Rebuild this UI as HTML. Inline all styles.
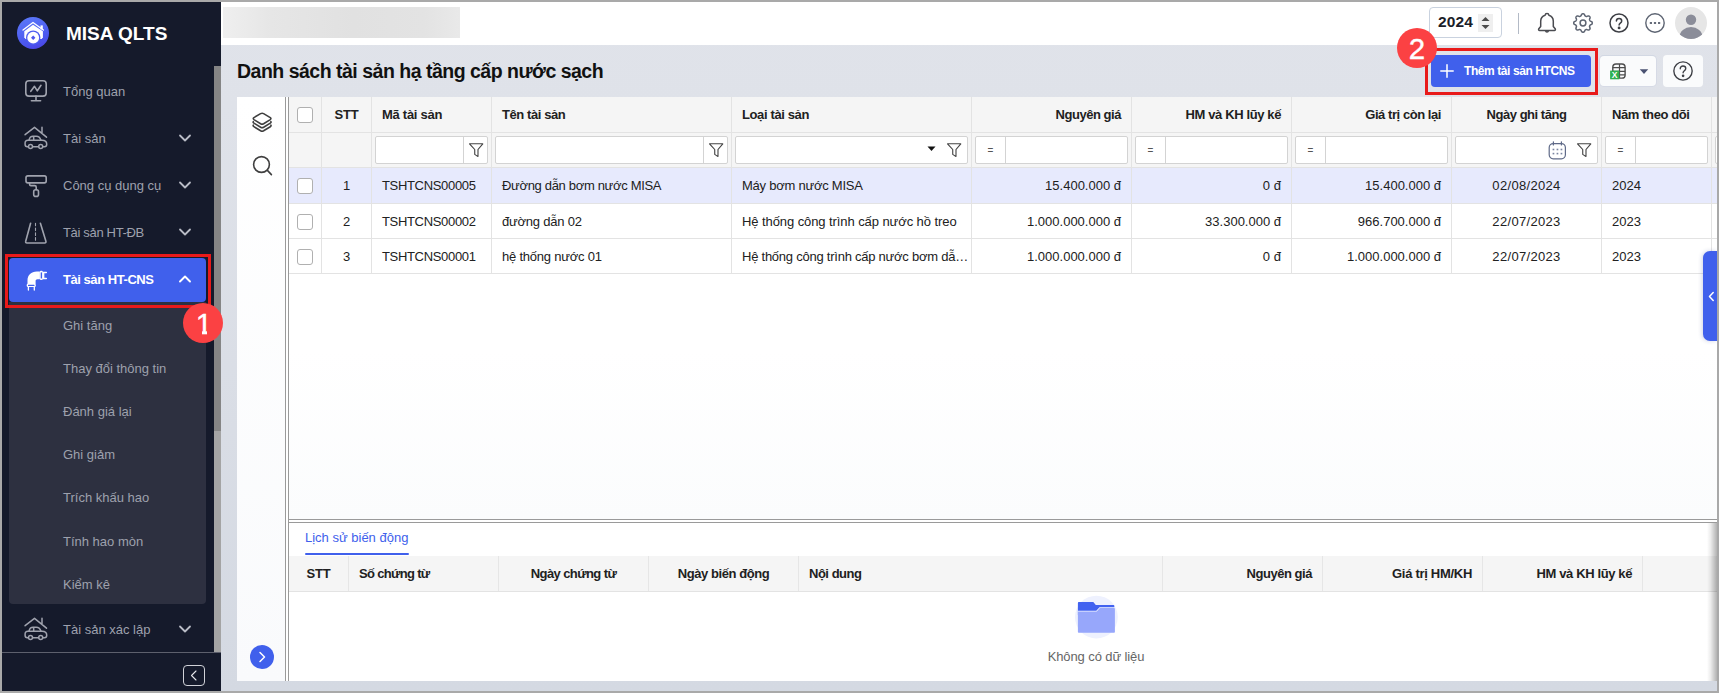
<!DOCTYPE html>
<html lang="vi">
<head>
<meta charset="utf-8">
<title>MISA QLTS - Danh sách tài sản hạ tầng cấp nước sạch</title>
<style>
*{box-sizing:border-box;margin:0;padding:0}
html,body{width:1719px;height:693px;overflow:hidden;background:#a9a9a9;font-family:"Liberation Sans",Arial,sans-serif;font-size:13px;color:#212121}
.abs{position:absolute}
#app{position:absolute;left:2px;top:2px;width:1715px;height:689px;background:linear-gradient(180deg,#e0e3ea 0%,#dfe2e9 15%,#d4d9e2 100%);overflow:hidden}
/* sidebar */
#side{position:absolute;left:0;top:0;width:219px;height:689px;background:#151a2b;color:#9ea1ad}
#side .logo{position:absolute;left:15px;top:15px;width:32px;height:32px;border-radius:50%;background:linear-gradient(160deg,#5c7cfa 0%,#4b55ee 70%,#4a3fe0 100%)}
#side .brand{position:absolute;left:64px;top:20px;font-size:19px;font-weight:700;color:#fff;letter-spacing:0;line-height:24px;white-space:nowrap}
.mi{position:absolute;left:0;width:212px;height:44px}
.mi .ic{position:absolute;left:21px;top:8px;width:26px;height:26px}
.mi .tx{position:absolute;left:61px;top:0;line-height:44px;font-size:13px;white-space:nowrap}
.mi .ch{position:absolute;left:176px;top:15px;width:14px;height:12px}
.mi.act{left:7px;width:197px;background:#4060ec;border-radius:4px;color:#fff}
.mi.act .tx{left:54px;font-weight:700;letter-spacing:-.45px}
.mi.act .ic{left:14px}
.mi.act .ch{left:169px}
#sub{position:absolute;left:7px;top:300px;width:197px;height:302px;background:#2d3040;border-radius:0 0 4px 4px}
#sub div{position:absolute;left:54px;font-size:13px;line-height:20px;white-space:nowrap;color:#9ea1ad}
#sbar{position:absolute;left:212px;top:64px;width:7px;height:587px;background:#a4a4a4}
#sbar i{position:absolute;left:0;top:0;width:7px;height:365px;background:#858585}
#sfoot{position:absolute;left:0;top:650px;width:219px;height:39px;border-top:1px solid #5d606d;background:#151a2b}
#sfoot .cb{position:absolute;left:181px;top:12px;width:22px;height:21px;border:1px solid #d0d2d8;border-radius:4px}
/* header */
#head{position:absolute;left:219px;top:0;width:1496px;height:43px;background:#fff}
#blur{position:absolute;left:2px;top:5px;width:237px;height:31px;background:linear-gradient(90deg,#efefef,#e6e6e6 20%,#e1e1e1 55%,#e3e3e3 85%,#e9e9e9)}
#year{position:absolute;left:1208px;top:5px;width:73px;height:31px;border:1px solid #c9d2df;border-radius:4px;background:#fff}
#year b{position:absolute;left:8px;top:-1px;line-height:30px;font-size:15.5px;font-weight:700;color:#1b1d29;letter-spacing:.1px}
#year i{position:absolute;left:48px;top:6px;width:15px;height:18px;background:#efefef}
#vdiv{position:absolute;left:1297px;top:11px;width:1px;height:21px;background:#b3bac6}
/* toolbar */
#title{position:absolute;left:235px;top:55px;font-size:19.500px;font-weight:700;color:#111;line-height:28px;letter-spacing:-.5px;white-space:nowrap}
#addbtn{position:absolute;left:1429px;top:53px;width:160px;height:32px;background:#4060ec;border-radius:4px;color:#fff}
#addbtn span{position:absolute;left:33px;top:0;line-height:32px;font-size:12px;font-weight:700;letter-spacing:-.42px;white-space:nowrap}
.wbtn{position:absolute;top:53px;height:32px;background:#fafbfc;border-radius:4px}
.redbox{position:absolute;border:3px solid #e81a1a}
.badge{position:absolute;width:40px;height:40px;border-radius:50%;background:#fb4143;color:#fff;font-size:29.500px;line-height:41.400px;text-align:center;overflow:hidden;-webkit-text-stroke:.35px #fff}
/* panel */
#panel{position:absolute;left:235px;top:95px;width:1480px;height:584px;background:#fff}
#lp{position:absolute;left:0;top:0;width:48px;height:584px;background:linear-gradient(180deg,#fff,#f9fafc)}
.vl{position:absolute;top:0;width:1px;height:584px;background:#9a9a9a}
.hl{position:absolute;left:52px;width:1428px;height:1px;background:#9a9a9a}
/* grid */
#grid{position:absolute;left:52px;top:0;width:1428px;height:422px;background:linear-gradient(180deg,#fff 60%,#fbfcfd)}
.row{position:absolute;left:0;width:1428px;border-bottom:1px solid #e3e3e3}
.row.hd{background:#f5f5f5;font-weight:700}
.row.sel{background:#e7eafd}
.row.sel .c{line-height:36px}.row.sel .cb{top:10px}
.c{position:absolute;top:0;height:100%;border-right:1px solid #e3e3e3;padding:0 10px;white-space:nowrap;overflow:hidden;line-height:35px}

.r{text-align:right}.m{text-align:center}
.cb{position:absolute;left:8px;top:10px;width:16px;height:16px;border:1px solid #b0b0b0;border-radius:3px;background:#fff}
.fi{position:absolute;top:3px;height:28px;border:1px solid #d3d3d3;border-radius:2px;background:#fff}
.fi u{position:absolute;top:0;width:1px;height:26px;background:#d3d3d3}
.fi em{position:absolute;left:11.500px;top:2px;line-height:24px;font-style:normal;font-size:10px;color:#555}
/* bottom */
#bot{position:absolute;left:52px;top:426px;width:1428px;height:158px;background:#fff}
#tab{position:absolute;left:16px;top:4px;line-height:22px;color:#4060ec;font-size:13px;white-space:nowrap}
#tabu{position:absolute;left:16px;top:30px;width:104px;height:2px;background:#4060ec;border-radius:1px}
#bh{position:absolute;left:0;top:33px;width:1428px;height:36px;background:#f5f5f5;border-bottom:1px solid #e3e3e3;font-weight:700}
#bh .c{line-height:35px;border-right:1px solid #e6e6e6}
#nodata{position:absolute;left:707px;top:126px;width:200px;text-align:center;color:#666;font-size:13px;letter-spacing:-.1px}
</style>
</head>
<body>
<div id="app">

<!-- ============ SIDEBAR ============ -->
<div id="side">
  <div class="logo">
    <svg width="32" height="32" viewBox="0 0 32 32"><path d="M6 13 16 5.400 26.400 13" fill="none" stroke="#fff" stroke-width="1.300" stroke-linecap="round" stroke-linejoin="round"/><rect x="23.500" y="8.400" width="2.300" height="4" fill="#fff"/><path d="M7.300 14.300 16 7.700l9.900 6.600v6l-1.200 1.600H8.500l-1.200-1.600z" fill="#fff"/><circle cx="16.200" cy="20.700" r="7.200" fill="#4d5cf0"/><circle cx="16.200" cy="20.700" r="5.900" fill="#fff"/><path d="M16.200 18.500l2.200 2.200-2.200 2.200-2.200-2.200z" fill="#4d55ee"/></svg>
  </div>
  <div class="brand">MISA QLTS</div>

  <div class="mi" style="top:68px">
    <svg class="ic" viewBox="0 0 26 26" fill="none" stroke="#a0a3ae" stroke-width="1.600" stroke-linecap="round" stroke-linejoin="round"><rect x="2.800" y="2.800" width="20.400" height="15.300" rx="3.200"/><path d="M13 18.100v4.500M8.400 22.700h9.200M7.800 13.300l3.700-5 2.800 4.500 3.700-5.500"/></svg>
    <div class="tx">Tổng quan</div>
  </div>
  <div class="mi" style="top:115px">
    <svg class="ic" viewBox="0 0 26 26" fill="none" stroke="#a0a3ae" stroke-width="1.500" stroke-linecap="round" stroke-linejoin="round"><path d="M2.100 9.700 11.500 2.300l12 9.900M19 2.300v6.100"/><path d="M6 15.200c.6-2.700 2-3.900 4-3.900h3.300c2.200 0 3.700 1.100 4.700 3.900M10.700 11.500v3.700"/><path d="M5.400 21.700H4.300c-1.300 0-2.200-.9-2.200-2.200v-1.600c0-1.600 1-2.700 2.700-2.700H19c2.800 0 4.700 1.500 4.700 3.800v.5c0 1.300-.9 2.200-2.200 2.200h-1.700M9.600 21.700h6"/><circle cx="7.500" cy="21.600" r="2"/><circle cx="17.700" cy="21.600" r="2"/></svg>
    <div class="tx">Tài sản</div>
    <svg class="ch" viewBox="0 0 14 12" fill="none" stroke="#b9bcc6" stroke-width="1.8" stroke-linecap="round" stroke-linejoin="round"><path d="M2 3.500 7 8.500l5-5"/></svg>
  </div>
  <div class="mi" style="top:162px">
    <svg class="ic" viewBox="0 0 26 26" fill="none" stroke="#a0a3ae" stroke-width="1.600" stroke-linecap="round" stroke-linejoin="round"><rect x="3" y="3.900" width="20.200" height="7" rx="1.800"/><path d="M6.600 10.900v1.300c0 .9.500 1.400 1.400 1.400h3.700c1 0 1.500.5 1.500 1.500v2.700"/><rect x="10.700" y="17.800" width="4.800" height="6.600" rx="2"/></svg>
    <div class="tx">Công cụ dụng cụ</div>
    <svg class="ch" viewBox="0 0 14 12" fill="none" stroke="#b9bcc6" stroke-width="1.8" stroke-linecap="round" stroke-linejoin="round"><path d="M2 3.500 7 8.500l5-5"/></svg>
  </div>
  <div class="mi" style="top:209px">
    <svg class="ic" viewBox="0 0 26 26" fill="none" stroke="#a0a3ae" stroke-width="1.600" stroke-linecap="round" stroke-linejoin="round"><path d="M7.600 4.200 2.700 22.300c-.3 1 .2 1.700 1.200 1.700h17.800c1 0 1.500-.7 1.200-1.700L17.400 4.200"/><path d="M12.500 4.200v2.600M12.500 9v2.600M12.500 13.800v2.600M12.500 18.600v2.600" stroke-width="1.100"/></svg>
    <div class="tx" style="letter-spacing:-.33px">Tài sản HT-ĐB</div>
    <svg class="ch" viewBox="0 0 14 12" fill="none" stroke="#b9bcc6" stroke-width="1.8" stroke-linecap="round" stroke-linejoin="round"><path d="M2 3.500 7 8.500l5-5"/></svg>
  </div>
  <div class="mi act" style="top:256px">
    <svg class="ic" viewBox="0 0 26 26"><path d="M4.500 18v-3.500c0-5.400 3.700-9 9.300-9h3.100v7.800h-2.400c-1.300 0-1.900.7-1.900 1.900V18z" fill="#fff"/><rect x="16.800" y="4.700" width="3.100" height="9.400" rx="1.300" fill="#fff"/><rect x="17.700" y="6.200" width="1.300" height="6.400" rx=".6" fill="#4060ec"/><path d="M23.300 6.400h-2.700v6.100h2.700" stroke="#fff" stroke-width="1.500" fill="none" stroke-linecap="round"/><rect x="3.700" y="17.700" width="9.100" height="3.300" rx="1.300" fill="#fff"/><rect x="5" y="18.800" width="6.500" height="1.100" rx=".5" fill="#4060ec"/><path d="M5.400 20.800v3.300M11.300 20.800v3.300" stroke="#fff" stroke-width="1.300" stroke-linecap="round"/></svg>
    <div class="tx">Tài sản HT-CNS</div>
    <svg class="ch" viewBox="0 0 14 12" fill="none" stroke="#fff" stroke-width="1.9" stroke-linecap="round" stroke-linejoin="round"><path d="M2 8.500 7 3.500l5 5"/></svg>
  </div>
  <div id="sub">
    <div style="top:14px">Ghi tăng</div>
    <div style="top:57px">Thay đổi thông tin</div>
    <div style="top:100px">Đánh giá lại</div>
    <div style="top:143px">Ghi giảm</div>
    <div style="top:186px">Trích khấu hao</div>
    <div style="top:230px">Tính hao mòn</div>
    <div style="top:273px">Kiểm kê</div>
  </div>
  <div class="mi" style="top:606px">
    <svg class="ic" viewBox="0 0 26 26" fill="none" stroke="#a0a3ae" stroke-width="1.500" stroke-linecap="round" stroke-linejoin="round"><path d="M2.100 9.700 11.500 2.300l12 9.900M19 2.300v6.100"/><path d="M6 15.200c.6-2.700 2-3.900 4-3.900h3.300c2.200 0 3.700 1.100 4.700 3.900M10.700 11.500v3.700"/><path d="M5.400 21.700H4.300c-1.300 0-2.200-.9-2.200-2.200v-1.600c0-1.600 1-2.700 2.700-2.700H19c2.800 0 4.700 1.500 4.700 3.800v.5c0 1.300-.9 2.200-2.200 2.200h-1.700M9.600 21.700h6"/><circle cx="7.500" cy="21.600" r="2"/><circle cx="17.700" cy="21.600" r="2"/></svg>
    <div class="tx">Tài sản xác lập</div>
    <svg class="ch" viewBox="0 0 14 12" fill="none" stroke="#b9bcc6" stroke-width="1.8" stroke-linecap="round" stroke-linejoin="round"><path d="M2 3.500 7 8.500l5-5"/></svg>
  </div>
  <div id="sbar"><i></i></div>
  <div id="sfoot"><div class="cb" style="background:none"><svg width="20" height="19" viewBox="0 0 20 19" fill="none" stroke="#e6e7ea" stroke-width="1.100" stroke-linecap="round" stroke-linejoin="round"><path d="M12 5 7.500 9.500 12 14"/></svg></div></div>
</div>
<div class="redbox" style="left:3px;top:252px;width:206px;height:54px"></div>
<div class="badge" style="left:181px;top:301px;padding-left:2px">1<i style="position:absolute;left:13px;top:27.300px;width:6.200px;height:5px;background:#fb4143"></i><i style="position:absolute;left:23.700px;top:27.300px;width:6px;height:5px;background:#fb4143"></i></div>

<!-- ============ HEADER ============ -->
<div id="head">
  <div id="blur"></div>
  <div id="year"><b>2024</b><i><svg width="15" height="18" viewBox="0 0 15 18"><path d="M7.500 3.100l4 3.900h-8zM7.500 14.900l-4-3.900h8z" fill="#4a4a4a"/></svg></i></div>
  <div id="vdiv"></div>
  <!-- bell -->
  <svg class="abs" style="left:1314px;top:9px" width="24" height="24" viewBox="0 0 24 24" fill="none" stroke="#4a4b50" stroke-width="1.500" stroke-linecap="round" stroke-linejoin="round"><path d="M12 2.600c-1 0-1.800.700-1.900 1.700-2.700.800-4.400 3.100-4.400 6v5.200l-1.900 2.300c-.5.700-.1 1.600.8 1.600h14.800c.9 0 1.300-.9.800-1.600l-1.900-2.300v-5.200c0-2.900-1.700-5.200-4.400-6-.1-1-.9-1.700-1.900-1.700z"/><path d="M10.500 19.700c.2.900.7 1.400 1.500 1.400s1.300-.5 1.500-1.400"/></svg>
  <!-- gear -->
  <svg class="abs" style="left:1350px;top:9px" width="24" height="24" viewBox="0 0 24 24" fill="none" stroke="#5d6472" stroke-width="1.500" stroke-linejoin="round"><path d="M12.00 2.75L12.36 2.77L12.72 2.86L13.06 3.05L13.36 3.40L13.61 3.91L13.82 4.43L14.03 4.80L14.27 5.03L14.52 5.18L14.77 5.30L15.04 5.40L15.33 5.47L15.66 5.47L16.07 5.36L16.58 5.14L17.12 4.95L17.58 4.92L17.95 5.03L18.27 5.22L18.54 5.46L18.78 5.73L18.97 6.05L19.08 6.42L19.05 6.88L18.86 7.42L18.64 7.93L18.53 8.34L18.53 8.67L18.60 8.96L18.70 9.23L18.82 9.48L18.97 9.73L19.20 9.97L19.57 10.18L20.09 10.39L20.60 10.64L20.95 10.94L21.14 11.28L21.23 11.64L21.25 12.00L21.23 12.36L21.14 12.72L20.95 13.06L20.60 13.36L20.09 13.61L19.57 13.82L19.20 14.03L18.97 14.27L18.82 14.52L18.70 14.77L18.60 15.04L18.53 15.33L18.53 15.66L18.64 16.07L18.86 16.58L19.05 17.12L19.08 17.58L18.97 17.95L18.78 18.27L18.54 18.54L18.27 18.78L17.95 18.97L17.58 19.08L17.12 19.05L16.58 18.86L16.07 18.64L15.66 18.53L15.33 18.53L15.04 18.60L14.77 18.70L14.52 18.82L14.27 18.97L14.03 19.20L13.82 19.57L13.61 20.09L13.36 20.60L13.06 20.95L12.72 21.14L12.36 21.23L12.00 21.25L11.64 21.23L11.28 21.14L10.94 20.95L10.64 20.60L10.39 20.09L10.18 19.57L9.97 19.20L9.73 18.97L9.48 18.82L9.23 18.70L8.96 18.60L8.67 18.53L8.34 18.53L7.93 18.64L7.42 18.86L6.88 19.05L6.42 19.08L6.05 18.97L5.73 18.78L5.46 18.54L5.22 18.27L5.03 17.95L4.92 17.58L4.95 17.12L5.14 16.58L5.36 16.07L5.47 15.66L5.47 15.33L5.40 15.04L5.30 14.77L5.18 14.52L5.03 14.27L4.80 14.03L4.43 13.82L3.91 13.61L3.40 13.36L3.05 13.06L2.86 12.72L2.77 12.36L2.75 12.00L2.77 11.64L2.86 11.28L3.05 10.94L3.40 10.64L3.91 10.39L4.43 10.18L4.80 9.97L5.03 9.73L5.18 9.48L5.30 9.23L5.40 8.96L5.47 8.67L5.47 8.34L5.36 7.93L5.14 7.42L4.95 6.88L4.92 6.42L5.03 6.05L5.22 5.73L5.46 5.46L5.73 5.22L6.05 5.03L6.42 4.92L6.88 4.95L7.42 5.14L7.93 5.36L8.34 5.47L8.67 5.47L8.96 5.40L9.23 5.30L9.48 5.18L9.73 5.03L9.97 4.80L10.18 4.43L10.39 3.91L10.64 3.40L10.94 3.05L11.28 2.86L11.64 2.77Z"/><circle cx="12" cy="12" r="2.900"/></svg>
  <!-- help -->
  <svg class="abs" style="left:1386px;top:9px" width="24" height="24" viewBox="0 0 24 24" fill="none" stroke="#3d3f45" stroke-width="1.500" stroke-linecap="round"><circle cx="12" cy="12" r="9"/><path d="M9.400 10.100c0-1.500 1.100-2.500 2.700-2.500 1.500 0 2.600.9 2.600 2.300 0 2.100-2.600 2.200-2.600 4"/><circle cx="12.100" cy="16.900" r=".7" fill="#3d3f45"/></svg>
  <!-- more -->
  <svg class="abs" style="left:1422px;top:9px" width="24" height="24" viewBox="0 0 24 24" fill="none" stroke="#5d6472" stroke-width="1.400"><circle cx="12" cy="12" r="9.200"/><g fill="#666c7a" stroke="none"><rect x="6.800" y="11" width="2.200" height="2"/><rect x="10.900" y="11" width="2.200" height="2"/><rect x="15" y="11" width="2.200" height="2"/></g></svg>
  <!-- avatar -->
  <svg class="abs" style="left:1454px;top:5px" width="32" height="32" viewBox="0 0 32 32"><defs><clipPath id="av"><circle cx="16" cy="16" r="16"/></clipPath></defs><circle cx="16" cy="16" r="16" fill="#e6e6e6"/><g clip-path="url(#av)" fill="#8b8d99"><circle cx="16" cy="12.800" r="5.200"/><ellipse cx="16" cy="30" rx="11.500" ry="10"/></g></svg>
</div>

<!-- ============ TOOLBAR ============ -->
<div id="title">Danh sách tài sản hạ tầng cấp nước sạch</div>
<div id="addbtn"><svg class="abs" style="left:9px;top:9px" width="14" height="14" viewBox="0 0 14 14" stroke="#fff" stroke-width="1.500" stroke-linecap="round"><path d="M7 .8v12.400M.8 7h12.400"/></svg><span>Thêm tài sản HTCNS</span></div>
<div class="wbtn" style="left:1598px;width:56px;top:54px;height:30px;box-shadow:0 -1px 0 0 #d2d8e3,0 0 0 1px rgba(205,212,225,.55)">
  <svg class="abs" style="left:9px;top:6px" width="19" height="19" viewBox="0 0 19 19"><rect x="3.800" y="2" width="12.300" height="14.100" rx="3.200" fill="none" stroke="#4d4d4d" stroke-width="1.400"/><path d="M3.800 5.700h12.300M3.800 9.300h12.300M3.800 12.800h12.300M10.500 2v14.100" stroke="#4d4d4d" stroke-width="1.200" fill="none"/><rect x="1.100" y="8.600" width="9.200" height="8.700" fill="#2fb14f"/><text x="5.700" y="16.200" font-family="Liberation Sans,Arial,sans-serif" font-size="8.500" font-weight="700" fill="#fff" text-anchor="middle">X</text></svg>
  <svg class="abs" style="left:39px;top:12px" width="10" height="7" viewBox="0 0 10 7"><path d="M.8 1.200h8.400L5 6z" fill="#4a5272"/></svg>
</div>
<div class="wbtn" style="left:1661px;width:40px">
  <svg class="abs" style="left:9px;top:5px" width="22" height="22" viewBox="0 0 24 24" fill="none" stroke="#3d3f45" stroke-width="1.500" stroke-linecap="round"><circle cx="12" cy="12" r="10"/><path d="M9 9.500c0-1.700 1.300-2.900 3-2.900s3 1.100 3 2.700c0 2.400-2.900 2.500-2.900 4.700"/><circle cx="12.100" cy="17.300" r=".7" fill="#3d3f45"/></svg>
</div>
<div class="redbox" style="left:1423px;top:46px;width:173px;height:47px"></div>
<div class="badge" style="left:1395px;top:26px">2</div>

<!-- ============ PANEL ============ -->
<div id="panel">
  <div id="lp">
    <svg class="abs" style="left:14px;top:14px" width="22" height="22" viewBox="0 0 22 22" fill="none" stroke="#3f3f3f" stroke-width="1.600" stroke-linejoin="round" stroke-linecap="round"><path d="M9.600 2.600Q11.100 1.800 12.600 2.600L19.300 6.600Q20.600 7.600 19.300 8.600L12.600 12.700Q11.100 13.500 9.600 12.700L2.900 8.600Q1.600 7.600 2.900 6.600Z"/><path d="M2.300 10.600Q1.800 11.400 2.900 12.100L9.600 16.200Q11.100 17 12.600 16.200L19.300 12.100Q20.400 11.400 19.900 10.600"/><path d="M2.300 14.200Q1.800 15 2.900 15.700L9.600 19.800Q11.100 20.600 12.600 19.800L19.300 15.700Q20.400 15 19.900 14.200"/></svg>
    <svg class="abs" style="left:14px;top:57px" width="23" height="23" viewBox="0 0 23 23" fill="none" stroke="#3f3f3f" stroke-width="1.600" stroke-linecap="round"><circle cx="10.500" cy="10.500" r="7.900"/><path d="M16.400 16.400l4 4.200"/></svg>
    <div class="abs" style="left:13px;top:548px;width:24px;height:24px;border-radius:50%;background:#4060ec"><svg width="24" height="24" viewBox="0 0 24 24" fill="none" stroke="#fff" stroke-width="1.500" stroke-linecap="round" stroke-linejoin="round"><path d="M10 7.500l4.500 4.500L10 16.500"/></svg></div>
  </div>
  <div class="vl" style="left:48px"></div><div class="vl" style="left:51px"></div>

  <div id="grid">
    <div class="row hd" style="top:0;height:36px">
      <div class="c" style="left:0;width:33px"><span class="cb"></span></div>
      <div class="c m" style="left:33px;width:50px;letter-spacing:-0.19px">STT</div>
      <div class="c" style="left:83px;width:120px;letter-spacing:-0.28px">Mã tài sản</div>
      <div class="c" style="left:203px;width:240px;letter-spacing:-0.41px">Tên tài sản</div>
      <div class="c" style="left:443px;width:240px;letter-spacing:-0.38px">Loại tài sản</div>
      <div class="c r" style="left:683px;width:160px;letter-spacing:-0.46px">Nguyên giá</div>
      <div class="c r" style="left:843px;width:160px;letter-spacing:-0.38px">HM và KH lũy kế</div>
      <div class="c r" style="left:1003px;width:160px;letter-spacing:-0.44px">Giá trị còn lại</div>
      <div class="c m" style="left:1163px;width:150px;letter-spacing:-0.47px">Ngày ghi tăng</div>
      <div class="c" style="left:1313px;width:110px;letter-spacing:-0.4px">Năm theo dõi</div>
    </div>
    <div class="row" style="top:36px;height:35px;background:#f5f5f5">
      <div class="c" style="left:0;width:33px"></div>
      <div class="c" style="left:33px;width:50px"></div>
      <div class="c" style="left:83px;width:120px"><div class="fi" style="left:3px;width:113px"><u style="left:87px"></u><svg class="abs" style="left:92px;top:5px" width="16" height="16" viewBox="0 0 16 16" fill="none" stroke="#444" stroke-width="1.100" stroke-linejoin="round"><path d="M1.500 1.500h13L9.800 7.800v7.800l-3.200-2.300V7.800z" transform="translate(0 .5) scale(1.02 .9)"/></svg></div></div>
      <div class="c" style="left:203px;width:240px"><div class="fi" style="left:3px;width:233px"><u style="left:207px"></u><svg class="abs" style="left:212px;top:5px" width="16" height="16" viewBox="0 0 16 16" fill="none" stroke="#444" stroke-width="1.100" stroke-linejoin="round"><path d="M1.500 1.500h13L9.800 7.800v7.800l-3.200-2.300V7.800z" transform="translate(0 .5) scale(1.02 .9)"/></svg></div></div>
      <div class="c" style="left:443px;width:240px"><div class="fi" style="left:3px;width:233px"><svg class="abs" style="left:191px;top:9px" width="9" height="6" viewBox="0 0 9 6"><path d="M.5.400h8L4.500 5z" fill="#111"/></svg><svg class="abs" style="left:210px;top:5px" width="16" height="16" viewBox="0 0 16 16" fill="none" stroke="#444" stroke-width="1.100" stroke-linejoin="round"><path d="M1.500 1.500h13L9.800 7.800v7.800l-3.200-2.300V7.800z" transform="translate(0 .5) scale(1.02 .9)"/></svg></div></div>
      <div class="c" style="left:683px;width:160px"><div class="fi" style="left:3px;width:153px"><u style="left:29px"></u><em>=</em></div></div>
      <div class="c" style="left:843px;width:160px"><div class="fi" style="left:3px;width:153px"><u style="left:29px"></u><em>=</em></div></div>
      <div class="c" style="left:1003px;width:160px"><div class="fi" style="left:3px;width:153px"><u style="left:29px"></u><em>=</em></div></div>
      <div class="c" style="left:1163px;width:150px"><div class="fi" style="left:3px;width:143px"><svg class="abs" style="left:92px;top:3px" width="19" height="20" viewBox="0 0 19 20" fill="none" stroke="#5f6a88" stroke-width="1.200" stroke-linecap="round"><rect x="1.200" y="3.600" width="16.200" height="15.200" rx="4"/><path d="M5.400 1.800v3.200M13.400 1.800v3.200"/><g fill="#7b85a1" stroke="none"><rect x="4.600" y="8.700" width="1.700" height="1.600"/><rect x="8.600" y="8.700" width="1.700" height="1.600"/><rect x="12.600" y="8.700" width="1.700" height="1.600"/><rect x="4.600" y="12.800" width="1.700" height="1.600"/><rect x="8.600" y="12.800" width="1.700" height="1.600"/><rect x="12.600" y="12.800" width="1.700" height="1.600"/></g></svg><svg class="abs" style="left:120px;top:5px" width="16" height="16" viewBox="0 0 16 16" fill="none" stroke="#444" stroke-width="1.100" stroke-linejoin="round"><path d="M1.500 1.500h13L9.800 7.800v7.800l-3.200-2.300V7.800z" transform="translate(0 .5) scale(1.02 .9)"/></svg></div></div>
      <div class="c" style="left:1313px;width:110px"><div class="fi" style="left:3px;width:103px"><u style="left:29px"></u><em>=</em></div></div>
      <div class="c" style="left:1423px;width:5px;border-right:none;padding:0"><div class="fi" style="left:3px;width:20px"></div></div>
    </div>
    <div class="row sel" style="top:71px;height:36px">
      <div class="c" style="left:0;width:33px"><span class="cb"></span></div>
      <div class="c m" style="left:33px;width:50px">1</div>
      <div class="c" style="left:83px;width:120px;letter-spacing:-0.33px">TSHTCNS00005</div>
      <div class="c" style="left:203px;width:240px;letter-spacing:-0.32px">Đường dẫn bơm nước MISA</div>
      <div class="c" style="left:443px;width:240px;letter-spacing:-0.24px">Máy bơm nước MISA</div>
      <div class="c r" style="left:683px;width:160px">15.400.000 đ</div>
      <div class="c r" style="left:843px;width:160px;letter-spacing:0.1px">0 đ</div>
      <div class="c r" style="left:1003px;width:160px">15.400.000 đ</div>
      <div class="c m" style="left:1163px;width:150px;letter-spacing:0.32px">02/08/2024</div>
      <div class="c" style="left:1313px;width:110px">2024</div>
    </div>
    <div class="row" style="top:107px;height:35px">
      <div class="c" style="left:0;width:33px"><span class="cb"></span></div>
      <div class="c m" style="left:33px;width:50px">2</div>
      <div class="c" style="left:83px;width:120px;letter-spacing:-0.33px">TSHTCNS00002</div>
      <div class="c" style="left:203px;width:240px;letter-spacing:-0.22px">đường dẫn 02</div>
      <div class="c" style="left:443px;width:240px;letter-spacing:-0.08px">Hệ thống công trình cấp nước hồ treo</div>
      <div class="c r" style="left:683px;width:160px">1.000.000.000 đ</div>
      <div class="c r" style="left:843px;width:160px">33.300.000 đ</div>
      <div class="c r" style="left:1003px;width:160px">966.700.000 đ</div>
      <div class="c m" style="left:1163px;width:150px;letter-spacing:0.32px">22/07/2023</div>
      <div class="c" style="left:1313px;width:110px">2023</div>
    </div>
    <div class="row" style="top:142px;height:35px">
      <div class="c" style="left:0;width:33px"><span class="cb"></span></div>
      <div class="c m" style="left:33px;width:50px">3</div>
      <div class="c" style="left:83px;width:120px;letter-spacing:-0.33px">TSHTCNS00001</div>
      <div class="c" style="left:203px;width:240px;letter-spacing:-0.22px">hệ thống nước 01</div>
      <div class="c" style="left:443px;width:240px;text-overflow:ellipsis;padding-right:2px;letter-spacing:-0.24px">Hệ thống công trình cấp nước bơm dẫn nước</div>
      <div class="c r" style="left:683px;width:160px">1.000.000.000 đ</div>
      <div class="c r" style="left:843px;width:160px;letter-spacing:0.1px">0 đ</div>
      <div class="c r" style="left:1003px;width:160px">1.000.000.000 đ</div>
      <div class="c m" style="left:1163px;width:150px;letter-spacing:0.32px">22/07/2023</div>
      <div class="c" style="left:1313px;width:110px">2023</div>
    </div>
  </div>

  <div class="hl" style="top:422px"></div><div class="hl" style="top:425px"></div>

  <div id="bot">
    <div id="tab">Lịch sử biến động</div><div id="tabu"></div>
    <div id="bh">
      <div class="c m" style="left:0;width:60px;letter-spacing:-0.19px">STT</div>
      <div class="c" style="left:60px;width:150px;letter-spacing:-0.68px">Số chứng từ</div>
      <div class="c m" style="left:210px;width:150px;letter-spacing:-0.6px">Ngày chứng từ</div>
      <div class="c m" style="left:360px;width:150px;letter-spacing:-0.42px">Ngày biến động</div>
      <div class="c" style="left:510px;width:364px;letter-spacing:-0.48px">Nội dung</div>
      <div class="c r" style="left:874px;width:160px;letter-spacing:-0.46px">Nguyên giá</div>
      <div class="c r" style="left:1034px;width:160px;letter-spacing:-0.29px">Giá trị HM/KH</div>
      <div class="c r" style="left:1194px;width:160px;letter-spacing:-0.38px">HM và KH lũy kế</div>
      <div class="c" style="left:1354px;width:74px;border-right:none"></div>
    </div>
    <svg class="abs" style="left:785px;top:72px" width="45" height="45" viewBox="0 0 45 45"><circle cx="22.400" cy="22.100" r="21.400" fill="#eef1fe"/><path d="M3.900 7.900Q3.900 7.100 4.700 7.100H19.300L21.800 10H39.500Q40.300 10 40.300 10.800V20H3.900Z" fill="#4262f0"/><path d="M3.900 15.700H22.300L25.500 12.300H40.900V20H3.900Z" fill="#f4f6ff"/><path d="M3.900 16.400H22.700L25.900 13H40.100Q40.900 13 40.900 13.800V36.900Q40.900 37.700 40.100 37.700H4.700Q3.900 37.700 3.900 36.900Z" fill="#97a7fb"/></svg>
    <div id="nodata">Không có dữ liệu</div>
  </div>
</div>

<!-- right tab + shadow -->
<div class="abs" style="left:1701px;top:249px;width:14px;height:90px;background:#4060ec;border-radius:7px 0 0 7px;box-shadow:-1px 0 4px rgba(40,60,140,.22)"><svg class="abs" style="left:5px;top:40px" width="7" height="11" viewBox="0 0 7 11" fill="none" stroke="#fff" stroke-width="1.500" stroke-linecap="round" stroke-linejoin="round"><path d="M5.200 1.500 1.500 5.500l3.700 4"/></svg></div>
<div class="abs" style="left:1705px;top:521px;width:10px;height:158px;background:linear-gradient(90deg,rgba(0,0,0,0),rgba(0,0,0,.07) 35%,rgba(0,0,0,.30))"></div>

</div>
</body>
</html>
